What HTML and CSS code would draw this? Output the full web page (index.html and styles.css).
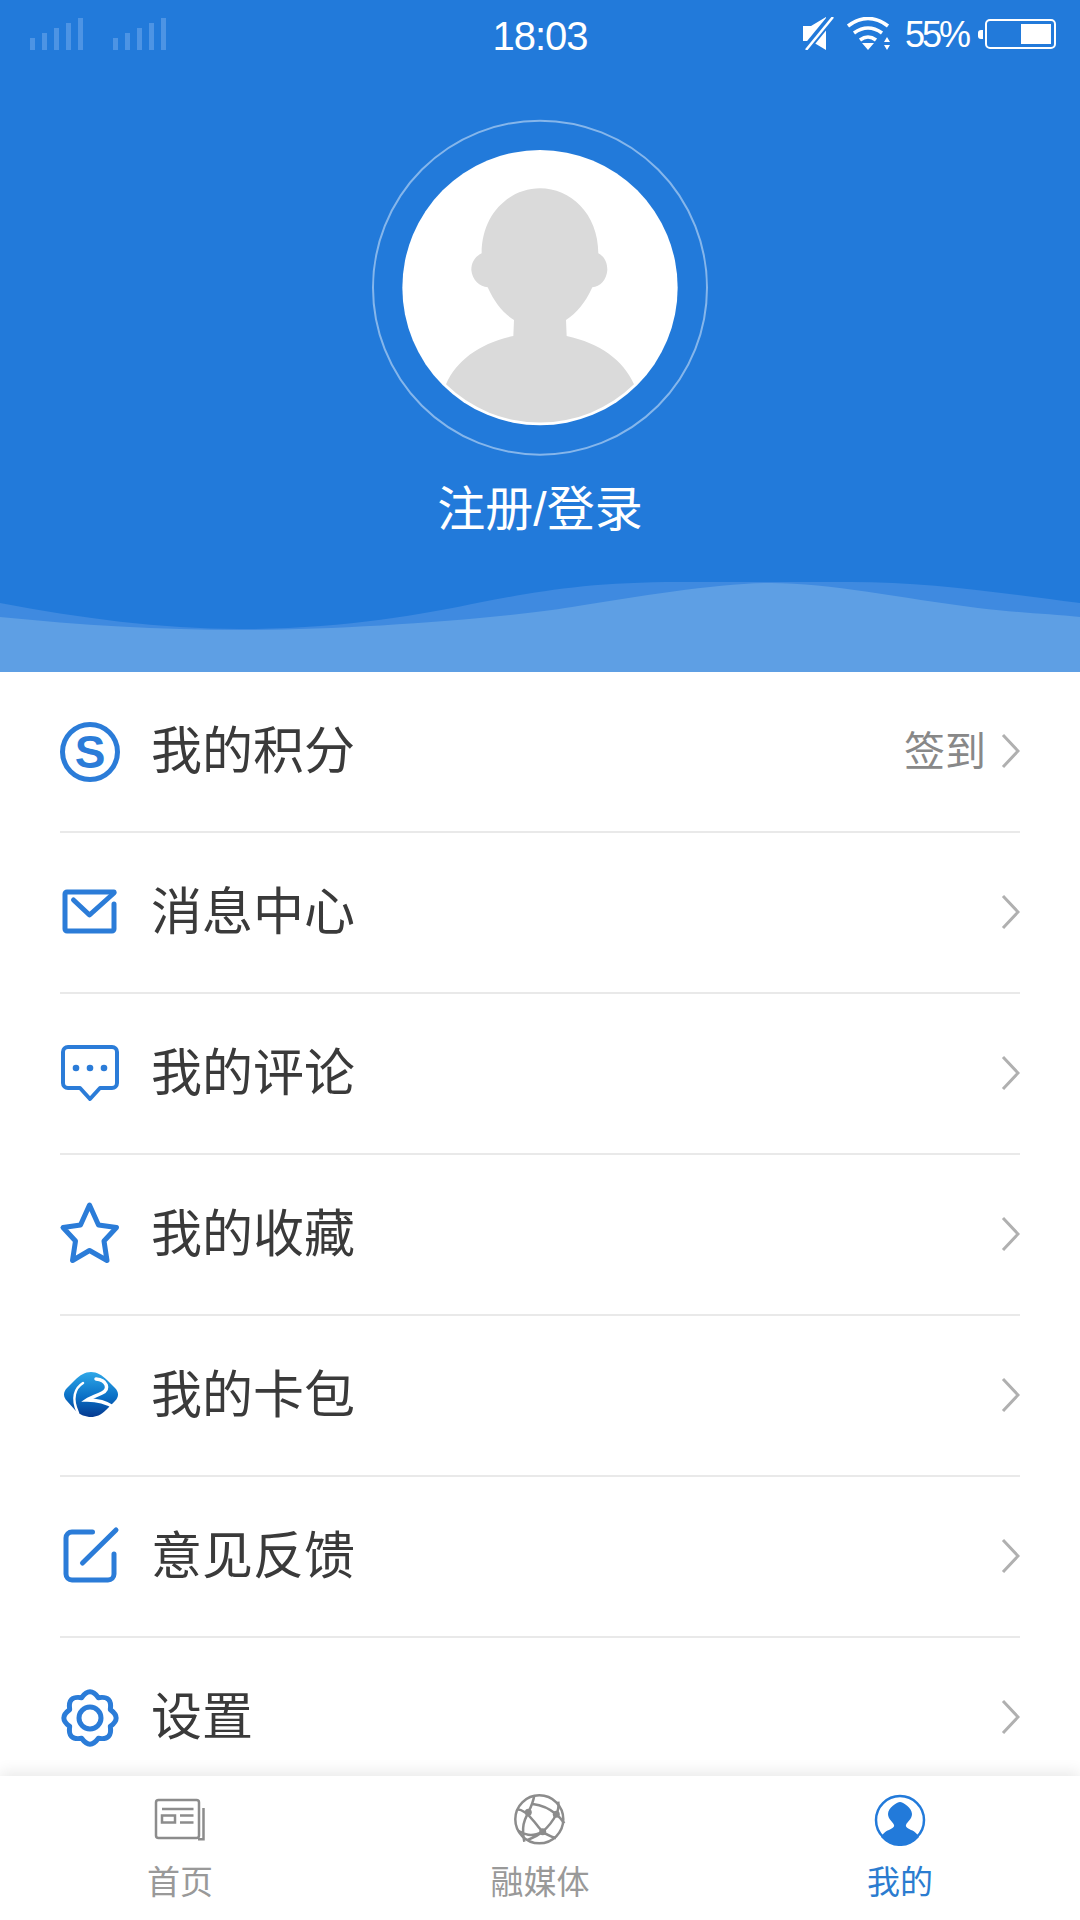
FILE: index.html
```html
<!DOCTYPE html>
<html lang="zh-CN">
<head>
  <meta charset="UTF-8">
  <title>我的</title>
  <link rel="stylesheet" href="styles.css">
</head>
<body>

  <header class="hero">
    <div class="status-bar">
      <div class="signals">
        <svg class="signal" width="54" height="32" viewBox="0 0 54 32"><path d="M0 20h5v12H0zM12 15h5v17h-5zM24 10h5v22h-5zM36 5h5v27h-5zM48 0h5v32h-5z"/></svg>
        <svg class="signal" width="54" height="32" viewBox="0 0 54 32"><path d="M0 20h5v12H0zM12 15h5v17h-5zM24 10h5v22h-5zM36 5h5v27h-5zM48 0h5v32h-5z"/></svg>
      </div>
      <div class="clock">18:03</div>
      <div class="status-right">
        <svg class="mute" width="32" height="33" viewBox="0 0 32 33">
          <path d="M1 9h8l15-9v33L9 24H1z" fill="#fff"/>
          <path d="M30 0L3 33" stroke="#227ada" stroke-width="8"/>
          <path d="M31 0L4 33" stroke="#fff" stroke-width="2.5"/>
        </svg>
        <svg class="wifi" width="46" height="33" viewBox="0 0 46 33">
          <path d="M2 9Q22-6 42 9M8 16Q22 6 36 16M14 23Q22 17 30 23" fill="none" stroke="#fff" stroke-width="3.6"/>
          <path d="M16 26h12l-6 7zM41 20l-3 5h6zM41 33l-3-5h6z" fill="#fff"/>
        </svg>
        <div class="battery-text">55%</div>
        <div class="battery-nub"></div>
        <div class="battery"><div class="battery-fill"></div></div>
      </div>
    </div>

    <svg class="avatar" width="400" height="370" viewBox="0 0 1200 1110">
      <circle cx="600" cy="563" r="501" fill="none" stroke="#fff" stroke-opacity="0.45" stroke-width="6"/>
      <circle cx="600" cy="563" r="413" fill="#fff"/>
      <path fill="#dadada" d="M425 460C425 340 510 265 600 265C690 265 775 340 775 460C795 470 802 490 802 510C800 540 780 560 757 562C735 610 710 640 678 660L680 708C780 730 850 780 882 853A404 404 0 0 1 318 853C350 780 420 730 520 708L522 660C490 640 465 610 443 562C420 560 396 540 394 510C394 490 403 470 425 460Z"/>
    </svg>

    <div class="login">注册/登录</div>

    <svg class="wave" width="1080" height="92" viewBox="0 0 1080 92">
      <path fill="#3f8ae0" d="M0 23C80 38 160 49 241 49C340 49 420 35 482 22C540 11 590 2 680 2H850C930 2 1000 13 1080 23V92H0Z"/>
      <path fill="#5e9fe4" d="M0 37C80 45 160 50 241 50C340 50 490 40 572 27C640 16 720 3 771 3C830 3 900 18 978 28C1020 33 1050 34 1080 37V92H0Z"/>
    </svg>
  </header>

  <main class="menu">
    <div class="row">
      <svg class="icon" width="60" height="60" viewBox="0 0 60 60">
        <circle class="heavy" cx="30" cy="30" r="27.5"/>
        <text class="icon-s" x="30" y="46" text-anchor="middle">S</text>
      </svg>
      <div class="row-title">我的积分</div>
      <div class="row-extra">签到</div>
      <svg class="chevron" width="19" height="36" viewBox="0 0 19 36"><path d="M2 2l15 16L2 34"/></svg>
    </div>

    <div class="row">
      <svg class="icon" width="60" height="60" viewBox="0 0 60 60">
        <path class="heavy" d="M54 9H7a2 2 0 0 0-2 2v35a2 2 0 0 0 2 2h45a2 2 0 0 0 2-2V21"/>
        <path class="heavy" d="M13.500 17L29.500 32L54 10"/>
      </svg>
      <div class="row-title">消息中心</div>
      <svg class="chevron" width="19" height="36" viewBox="0 0 19 36"><path d="M2 2l15 16L2 34"/></svg>
    </div>

    <div class="row">
      <svg class="icon" width="60" height="60" viewBox="0 0 60 60">
        <path d="M8 3h44a5 5 0 0 1 5 5v31a5 5 0 0 1-5 5H40L30 55L20 44H8a5 5 0 0 1-5-5V8a5 5 0 0 1 5-5z"/>
        <circle class="dot" cx="16" cy="24" r="3.300"/>
        <circle class="dot" cx="30" cy="24" r="3.300"/>
        <circle class="dot" cx="44" cy="24" r="3.300"/>
      </svg>
      <div class="row-title">我的评论</div>
      <svg class="chevron" width="19" height="36" viewBox="0 0 19 36"><path d="M2 2l15 16L2 34"/></svg>
    </div>

    <div class="row">
      <svg class="icon" width="60" height="60" viewBox="0 0 60 60">
        <path class="heavy" d="M29.500 0L38.500 20L56.500 22.500L44 36L47 55.500L29.500 45.500L12.500 55.500L15.500 36L3 22.500L20.500 20Z"/>
      </svg>
      <div class="row-title">我的收藏</div>
      <svg class="chevron" width="19" height="36" viewBox="0 0 19 36"><path d="M2 2l15 16L2 34"/></svg>
    </div>

    <div class="row">
      <svg class="logo" width="60" height="60" viewBox="0 0 60 60">
        <defs>
          <linearGradient id="logoBlue" x1="0" y1="0" x2="0" y2="1">
            <stop offset="0" stop-color="#2fa8e8"/>
            <stop offset="0.55" stop-color="#0a70c6"/>
            <stop offset="1" stop-color="#063a90"/>
          </linearGradient>
        </defs>
        <path fill="url(#logoBlue)" d="M31 6C37 6 42 9 47 14L55 22C59 26 59 31 55 35L46 44C41 49 36 51 31 51C26 51 20 49 15 44L7 35C3 31 3 26 7 22L15 14C20 9 25 6 31 6Z"/>
        <path fill="none" stroke="#fff" stroke-width="2.500" stroke-linecap="round" d="M23 17C15 22 11 32 18 47"/>
        <path fill="none" stroke="#fff" stroke-width="3.500" stroke-linecap="round" d="M36 13C47 14 50 23 42 27C36 30 30 32 27 34C36 34 46 36 53 41"/>
      </svg>
      <div class="row-title">我的卡包</div>
      <svg class="chevron" width="19" height="36" viewBox="0 0 19 36"><path d="M2 2l15 16L2 34"/></svg>
    </div>

    <div class="row">
      <svg class="icon" width="60" height="60" viewBox="0 0 60 60">
        <path class="heavy" d="M32.500 5H12a6 6 0 0 0-6 6v36a6 6 0 0 0 6 6h36a6 6 0 0 0 6-6V27"/>
        <path class="heavy" d="M56 3L22.500 36"/>
      </svg>
      <div class="row-title">意见反馈</div>
      <svg class="chevron" width="19" height="36" viewBox="0 0 19 36"><path d="M2 2l15 16L2 34"/></svg>
    </div>

    <div class="row row-last">
      <svg class="icon" width="60" height="60" viewBox="0 0 60 60">
        <path class="heavy" d="M38.400 9.700Q30-2 21.600 9.700Q7.400 7.400 9.700 21.600Q-2 30 9.700 38.400Q7.400 52.600 21.600 50.300Q30 62 38.400 50.300Q52.600 52.600 50.300 38.400Q62 30 50.300 21.600Q52.600 7.400 38.400 9.700Z"/>
        <circle class="heavy" cx="30" cy="30" r="11"/>
      </svg>
      <div class="row-title">设置</div>
      <svg class="chevron" width="19" height="36" viewBox="0 0 19 36"><path d="M2 2l15 16L2 34"/></svg>
    </div>
  </main>

  <nav class="tabs">
    <div class="tab">
      <svg class="tab-icon" width="52" height="52" viewBox="0 0 52 52">
        <rect x="2" y="6" width="43" height="38" rx="2.500"/>
        <path d="M49.500 14V45.200H44M8 15H39.500M26 21.500H39.500M26 28.500H39.500"/>
        <rect x="8" y="21.500" width="13" height="7"/>
      </svg>
      <div class="tab-label">首页</div>
    </div>
    <div class="tab">
      <svg class="tab-icon" width="52" height="52" viewBox="0 0 52 52">
        <circle cx="25.300" cy="25.300" r="24"/>
        <path d="M20.300 1.500C19 9 16.500 14 14.300 18.300C11 25 7 31 10.300 47.700M3 15.300C9 15.500 15 21 20.300 27.700C23 31 25.500 35 28.700 37.700C32 40.500 37 42.500 42 44.300M18.700 10C27 11 36 15 42.300 20.300C45.500 23 48 26 50.300 29.300M44.300 7.700C45 13 44 17 42.300 20.300C39 27 34 33 28.700 37.700C24 41.500 19 44 13.700 46M4.300 36.700C9 39.500 13 41 17 41C21 41 25 39.500 28.700 37.700"/>
        <circle class="node" cx="14.300" cy="18.300" r="3.500"/>
        <circle class="node" cx="42.300" cy="20.300" r="3.500"/>
        <circle class="node" cx="28.700" cy="37.700" r="3.500"/>
      </svg>
      <div class="tab-label">融媒体</div>
    </div>
    <div class="tab tab-active">
      <svg class="tab-icon" width="52" height="52" viewBox="0 0 52 52">
        <circle cx="26" cy="26" r="24"/>
        <path class="me" d="M26 8C29 8 38 14 38 20C38 25 33 28 32 31C31.500 33 33 34 37 36C41 37 44 41 45 43A24.500 24.500 0 0 1 7 43C8 41 11 37 15 36C19 34 20.500 33 20 31C19 28 14 25 14 20C14 14 23 8 26 8Z"/>
      </svg>
      <div class="tab-label">我的</div>
    </div>
  </nav>

</body>
</html>
```

FILE: styles.css
```css
body {
  margin: 0;
  width: 1080px;
  height: 1920px;
  display: flex;
  flex-direction: column;
  overflow: hidden;
  background-color: #ffffff;
  font-family: 'Noto Sans CJK SC', 'Liberation Sans', sans-serif;
}

svg {
  display: block;
  flex-shrink: 0;
}

/* top blue part */
.hero {
  position: relative;
  height: 672px;
  flex-shrink: 0;
  background-color: #227ada;
  color: #ffffff;
}

.status-bar {
  position: relative;
  height: 70px;
  display: flex;
  align-items: flex-start;
  justify-content: space-between;
  padding: 0 24px 0 30px;
  font-family: 'Liberation Sans', sans-serif;
}

.signals {
  display: flex;
  gap: 29px;
  margin-top: 18px;
}

.signal {
  fill: #4d94e4;
}

.clock {
  position: absolute;
  left: 0;
  right: 0;
  top: 13px;
  text-align: center;
  font-size: 40px;
  line-height: 46px;
  letter-spacing: -1px;
}

.status-right {
  display: flex;
  align-items: flex-start;
  margin-top: 17px;
}

.wifi {
  margin-left: 12px;
}

.battery-text {
  margin-left: 13px;
  width: 73px;
  font-size: 36px;
  line-height: 36px;
  letter-spacing: -3px;
}

.battery-nub {
  width: 5px;
  height: 9px;
  margin: 13px 2px 0 0;
  border-radius: 3px 0 0 3px;
  background-color: #ffffff;
}

.battery {
  width: 71px;
  height: 30px;
  box-sizing: border-box;
  margin-top: 2px;
  padding: 3px 3px 3px 34px;
  border: 2px solid #ffffff;
  border-radius: 5px;
}

.battery-fill {
  height: 100%;
  background-color: #ffffff;
}

.avatar {
  margin: 30px auto 0;
}

.login {
  margin-top: 10px;
  text-align: center;
  font-family: 'Liberation Sans', 'Noto Sans CJK SC', sans-serif;
  font-size: 48px;
  line-height: 60px;
}

.wave {
  position: absolute;
  left: 0;
  bottom: 0;
}

/* menu rows */
.menu {
  flex: 1;
  overflow: hidden;
  padding: 0 60px;
}

.row {
  height: 159px;
  display: flex;
  align-items: center;
  gap: 31px;
  border-bottom: 2px solid #e9e9e9;
}

.row-last {
  border-bottom: none;
}

.row-title {
  flex: 1;
  margin-bottom: 9px;
  font-size: 51px;
  color: #3a3a3a;
}

.row-extra {
  margin: 0 -16px 8px 0;
  font-size: 41px;
  color: #888888;
}

.chevron {
  margin-bottom: 2px;
  fill: none;
  stroke: #b0b0b0;
  stroke-width: 3;
}

.icon {
  overflow: visible;
  fill: none;
  stroke: #2b7cd8;
  stroke-width: 4;
  stroke-linecap: round;
  stroke-linejoin: round;
}

.icon .heavy {
  stroke-width: 5;
}

.icon .dot {
  fill: #2b7cd8;
  stroke: none;
}

.icon-s {
  fill: #2b7cd8;
  stroke: none;
  font-family: 'Liberation Sans', sans-serif;
  font-size: 46px;
  font-weight: bold;
}

/* bottom tabs */
.tabs {
  position: relative;
  height: 144px;
  flex-shrink: 0;
  display: flex;
  box-sizing: border-box;
  padding-top: 18px;
  background-color: #ffffff;
  box-shadow: 0 -4px 14px rgba(0, 0, 0, 0.09);
}

.tab {
  flex: 1;
  display: flex;
  flex-direction: column;
  align-items: center;
}

.tab-icon {
  fill: none;
  stroke: #8c8c8c;
  stroke-width: 2.500;
}

.tab-icon .node {
  fill: #8c8c8c;
  stroke: none;
}

.tab-label {
  margin-top: 14px;
  font-size: 33px;
  line-height: 40px;
  color: #999999;
}

.tab-active .tab-icon {
  stroke: #227ada;
}

.tab-active .me {
  fill: #227ada;
  stroke: none;
}

.tab-active .tab-label {
  color: #2b7cd0;
}
```
